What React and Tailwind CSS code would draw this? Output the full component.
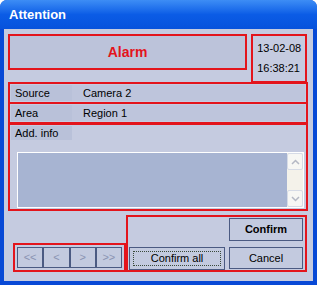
import React from "react";

const RED = "border-[#e3141c]";

const Row = ({ label, value, className = "" }) => (
    <div className={`h-[22px] border-2 ${RED} flex p-[1px] ${className}`}>
        <div className="w-[61px] bg-[#b9c1d9] flex items-center pl-[4px]">{label}</div>
        <div className="flex-1 bg-[#bec5dc] flex items-center pl-[11px]">{value}</div>
    </div>
);

const NavButton = ({ children }) => (
    <div className="flex-1 h-full border border-[#4b5a82] bg-[#c3cadf] flex items-center justify-center text-[#8a93b2] text-[11px]">
        {children}
    </div>
);

const Chevron = ({ up }) => (
    <svg width="9" height="6" viewBox="0 0 9 6">
        <path d={up ? "M1 5 L4.5 1.5 L8 5" : "M1 1 L4.5 4.5 L8 1"} fill="none" stroke="#b4b8c4" strokeWidth="1.5" />
    </svg>
);

export default function App() {
    return (
        <div className="w-[319px] h-[286px] bg-white font-['Liberation_Sans',sans-serif] text-[11px] text-black">
            <div className="w-[317px] h-[285px] flex flex-col rounded-t-[7px] bg-[#0849d6] overflow-hidden">
                <div className="h-[29px] shrink-0 flex items-center pl-[9px] text-white font-bold text-[13px] bg-gradient-to-b from-[#3d8df5] via-[#0b5ce6] to-[#0752dc]">
                    Attention
                </div>
                <div className="flex-1 mx-[4px] mb-[4px] bg-[#c5cbe0] pt-[5px] pl-[4px] pr-[6px]">
                    <div className="flex gap-[4px] items-start">
                        <div className={`w-[240px] h-[36px] border-2 ${RED} flex items-center justify-center text-[#e3141c] font-bold text-[14px] bg-[#bcc3da]`}>
                            Alarm
                        </div>
                        <div className={`w-[56px] h-[49px] border-2 ${RED} flex flex-col justify-center gap-[9px] pl-[4px] leading-none`}>
                            <span>13-02-08</span>
                            <span>16:38:21</span>
                        </div>
                    </div>
                    <div className="w-[300px]">
                        <Row label="Source" value="Camera 2" className="-mt-[1px]" />
                        <Row label="Area" value="Region 1" className="-mt-[2px] h-[21px]" />
                        <div className={`-mt-[1px] h-[88px] border-2 ${RED} flex flex-col pt-[1px] pl-[1px]`}>
                            <div className="w-[61px] h-[14px] bg-[#b9c1d9] flex items-center pl-[4px]">Add. info</div>
                            <div className="mt-[12px] ml-[6px] mr-[2px] h-[56px] border border-white bg-[#a7b4d2] flex justify-end">
                                <div className="w-[16px] h-full bg-[#f4f2ea] flex flex-col justify-between">
                                    <div className="h-[17px] border border-[#d6dbe6] rounded-[2px] bg-[#f7f7f4] flex items-center justify-center">
                                        <Chevron up />
                                    </div>
                                    <div className="h-[17px] border border-[#d6dbe6] rounded-[2px] bg-[#f7f7f4] flex items-center justify-center">
                                        <Chevron />
                                    </div>
                                </div>
                            </div>
                        </div>
                        <div className="flex items-end mt-[4px]">
                            <div className={`ml-[5px] w-[113px] h-[29px] border-2 ${RED} p-[2px] flex`}>
                                <NavButton>&lt;&lt;</NavButton>
                                <NavButton>&lt;</NavButton>
                                <NavButton>&gt;</NavButton>
                                <NavButton>&gt;&gt;</NavButton>
                            </div>
                            <div className={`w-[181px] h-[57px] border-2 ${RED} flex flex-col pt-[1px] pl-[1px] pr-[2px]`}>
                                <div className="flex justify-end">
                                    <div className="w-[74px] h-[23px] border border-[#4b5a82] bg-[#c3cadf] flex items-center justify-center font-bold">
                                        Confirm
                                    </div>
                                </div>
                                <div className="flex justify-between mt-[6px]">
                                    <div className="w-[96px] h-[23px] border border-[#4b5a82] bg-[#c3cadf] p-[3px]">
                                        <div className="w-full h-full border border-dotted border-[#3a4a3a] flex items-center justify-center">
                                            Confirm all
                                        </div>
                                    </div>
                                    <div className="w-[74px] h-[22px] border border-[#4b5a82] bg-[#c3cadf] flex items-center justify-center">
                                        Cancel
                                    </div>
                                </div>
                            </div>
                        </div>
                    </div>
                </div>
            </div>
        </div>
    );
}
